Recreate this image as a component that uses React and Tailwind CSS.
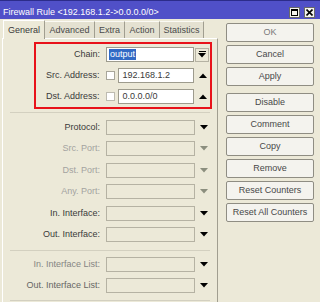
import React from "react";

const Down = ({ color = "#000" }) => (
  <svg width="8" height="5" viewBox="0 0 8 5">
    <polygon points="0,0 8,0 4,4.5" fill={color} />
  </svg>
);

const Up = () => (
  <svg width="8" height="5" viewBox="0 0 8 5">
    <polygon points="4,0.5 8,5 0,5" fill="#000" />
  </svg>
);

const tabs = ["Advanced", "Extra", "Action", "Statistics"];
const tabWidths = ["w-[50px]", "w-[30px]", "w-[35px]", "w-[44px]"];

const buttons = [
  { name: "OK", cls: "mt-0" },
  { name: "Cancel", cls: "mt-[3px]" },
  { name: "Apply", cls: "mt-[3px]" },
  { name: "Disable", cls: "mt-[7px]" },
  { name: "Comment", cls: "mt-[3px]" },
  { name: "Copy", cls: "mt-[3px]" },
  { name: "Remove", cls: "mt-[3px]" },
  { name: "Reset Counters", cls: "mt-[3px]" },
  { name: "Reset All Counters", cls: "mt-[3px]" },
];

// lower rows of the General tab
const Field = ({ label, mt, dim, arrow = "#000" }) => (
  <div className={`flex items-center h-[15px] ${mt}`}>
    <div className={`w-[97px] text-right whitespace-nowrap ${dim}`}>{label}</div>
    <div className="ml-[6px] w-[89px] h-[15px] border border-[#b5b2a3] bg-[#ece9d8]" />
    <div className="ml-[1px] w-[15px] flex justify-center">
      <Down color={arrow} />
    </div>
  </div>
);

export default function App() {
  return (
    <div
      className="w-[320px] h-[302px] overflow-hidden bg-[#ece9d8] text-[9px] leading-none text-[#3a3a3a]"
      style={{ fontFamily: '"Liberation Sans", Arial, sans-serif' }}
    >
      {/* title bar */}
      <div className="h-[19px] border-t border-[#2c2c8a] bg-[#5050c8] pt-[4px] flex items-center pl-[3px] pr-[5px] text-white">
        <span className="flex-1 whitespace-nowrap">Firewall Rule &lt;192.168.1.2-&gt;0.0.0.0/0&gt;</span>
        <div className="w-[11px] h-[11px] bg-[#f4f3ee] border border-[#6a6a6a] flex items-center justify-center">
          <svg width="7" height="7" viewBox="0 0 7 7">
            <rect x="0.5" y="0.5" width="6" height="6" fill="none" stroke="#000" />
            <rect x="0" y="0" width="7" height="2" fill="#000" />
          </svg>
        </div>
        <div className="ml-[4px] w-[11px] h-[11px] bg-[#f4f3ee] border border-[#6a6a6a] flex items-center justify-center">
          <svg width="7" height="7" viewBox="0 0 7 7">
            <path d="M0.5 0.5 L6.5 6.5 M6.5 0.5 L0.5 6.5" stroke="#000" strokeWidth="1.6" />
          </svg>
        </div>
      </div>

      <div className="flex">
        {/* left: tabs + panel */}
        <div className="ml-[2px] w-[216px] mt-[1px] flex flex-col">
          <div className="h-[18px] flex items-end pl-[1px]">
            <div className="relative z-10 -mb-px w-[42px] h-[19px] bg-[#ece9d8] border-t border-l border-r border-t-white border-l-white border-r-[#a19e90] flex items-center justify-center pt-[1px]">
              General
            </div>
            {tabs.map((t, i) => (
              <div
                key={t}
                className={`${tabWidths[i]} h-[17px] bg-[#e4e1d1] border-t border-r border-t-[#fbfaf4] border-r-[#a19e90] flex items-center justify-center pt-[1px] text-[#4a4a4a]`}
              >
                {t}
              </div>
            ))}
          </div>

          <div className="h-[270px] border-t border-l border-r border-t-white border-l-white border-r-[#a19e90]">
            {/* highlighted block */}
            <div className="ml-[31px] mt-[3px] w-[178px] h-[67px] border-2 border-[#e8121a]">
              <div className="flex items-center h-[15px] mt-[3px]">
                <div className="w-[64px] text-right">Chain:</div>
                <div className="ml-[6px] w-[88px] h-[15px] border border-[#9d9b8d] bg-white flex items-center pl-[2px]">
                  <span className="bg-[#316ac5] text-white px-[1px] h-[11px] flex items-center">output</span>
                </div>
                <div className="ml-[1px] w-[14px] h-[14px] border border-[#b5b2a3] bg-[#ece9d8] flex flex-col items-center justify-center gap-[1px]">
                  <div className="w-[7px] h-px bg-black" />
                  <Down />
                </div>
              </div>
              <div className="flex items-center h-[15px] mt-[6px]">
                <div className="w-[64px] text-right whitespace-nowrap">Src. Address:</div>
                <div className="ml-[6px] w-[9px] h-[9px] border border-[#a8a69a] bg-white" />
                <div className="ml-[3px] w-[77px] h-[15px] border border-[#9d9b8d] bg-white flex items-center pl-[4px]">
                  192.168.1.2
                </div>
                <div className="ml-[1px] w-[15px] flex justify-center">
                  <Up />
                </div>
              </div>
              <div className="flex items-center h-[15px] mt-[6px]">
                <div className="w-[64px] text-right whitespace-nowrap">Dst. Address:</div>
                <div className="ml-[6px] w-[9px] h-[9px] border border-[#bdbbb0] bg-white" />
                <div className="ml-[3px] w-[77px] h-[15px] border border-[#9d9b8d] bg-white flex items-center pl-[4px]">
                  0.0.0.0/0
                </div>
                <div className="ml-[1px] w-[15px] flex justify-center">
                  <Up />
                </div>
              </div>
            </div>

            <div className="ml-[7px] mt-[3px] w-[200px] border-t border-[#d3d0c0]" />

            <Field label="Protocol:" mt="mt-[7px]" dim="text-[#3a3a3a]" />
            <Field label="Src. Port:" mt="mt-[6px]" dim="text-[#a3a3a0]" arrow="#8b8e7e" />
            <Field label="Dst. Port:" mt="mt-[7px]" dim="text-[#a3a3a0]" arrow="#8b8e7e" />
            <Field label="Any. Port:" mt="mt-[6px]" dim="text-[#a3a3a0]" arrow="#8b8e7e" />
            <Field label="In. Interface:" mt="mt-[7px]" dim="text-[#3a3a3a]" />
            <Field label="Out. Interface:" mt="mt-[6px]" dim="text-[#3a3a3a]" />

            <div className="ml-[7px] mt-[8px] w-[200px] border-t border-[#d3d0c0]" />

            <Field label="In. Interface List:" mt="mt-[6px]" dim="text-[#858583]" />
            <Field label="Out. Interface List:" mt="mt-[6px]" dim="text-[#666664]" />

            <div className="ml-[7px] mt-[7px] w-[200px] border-t border-[#d3d0c0]" />
          </div>
        </div>

        {/* right: buttons */}
        <div className="ml-[8px] mt-[4px] w-[88px] flex flex-col">
          {buttons.map((b) => (
            <div
              key={b.name}
              className={`${b.cls} h-[19px] rounded-[2px] border border-[#8f8d83] bg-[#f4f3ee] flex items-center justify-center whitespace-nowrap ${
                b.name === "OK" ? "text-[#7a7a7a]" : "text-[#484848]"
              }`}
            >
              {b.name}
            </div>
          ))}
        </div>
      </div>
    </div>
  );
}
